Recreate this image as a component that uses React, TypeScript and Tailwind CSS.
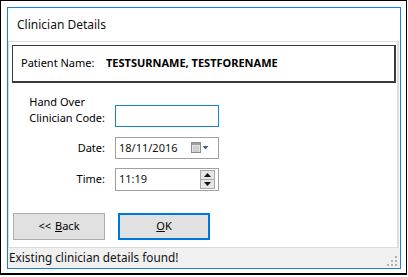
import React from "react";

const font = { fontFamily: '"Noto Sans", "Open Sans", sans-serif' };

function CalendarIcon() {
  return (
    <svg width="18" height="12" viewBox="0 0 18 12">
      <rect x="0.5" y="0.5" width="9" height="10" fill="#e4e4e4" stroke="#8c8c8c" />
      <rect x="1" y="1" width="8" height="2" fill="#a0a0a0" />
      <line x1="2" y1="5" x2="8" y2="5" stroke="#bcbcbc" />
      <line x1="2" y1="7" x2="8" y2="7" stroke="#bcbcbc" />
      <line x1="2" y1="9" x2="8" y2="9" stroke="#bcbcbc" />
      <path d="M11.5 4 L17.5 4 L14.5 7.5 Z" fill="#4b5c8c" />
    </svg>
  );
}

function Spin() {
  return (
    <div className="flex flex-col w-[15px] h-[19px] border border-[#a8a8a8] bg-[#e6e6e6]">
      <div className="flex-1 flex items-center justify-center border-b border-[#a8a8a8]">
        <svg width="7" height="4" viewBox="0 0 7 4"><path d="M0 4 L3.5 0 L7 4 Z" fill="#111" /></svg>
      </div>
      <div className="flex-1 flex items-center justify-center">
        <svg width="7" height="4" viewBox="0 0 7 4"><path d="M0 0 L3.5 4 L7 0 Z" fill="#111" /></svg>
      </div>
    </div>
  );
}

function Grip() {
  const dots = [
    [8, 0],
    [4, 4], [8, 4],
    [0, 8], [4, 8], [8, 8],
  ];
  return (
    <svg width="11" height="11" viewBox="0 0 11 11">
      {dots.map(([x, y], i) => (
        <rect key={i} x={x} y={y} width="2" height="2" fill="#b0b0b0" />
      ))}
    </svg>
  );
}

export default function App() {
  return (
    <div className="w-[408px] h-[277px] bg-white text-black text-[11px]" style={font}>
      <div className="w-[407px] h-[275px] border border-black border-b-2 pt-[6px] pl-[6px] pr-[5px] pb-[4px]">
        <div className="w-full h-full border border-[#1a82d6] flex flex-col bg-white">
          <div className="h-[33px] flex items-center pl-[9px] text-[12px] text-[#111]">Clinician Details</div>
          <div className="flex-1 border border-[#dcdcdc] border-r-2 mr-[1px] flex flex-col">
            <div className="mt-[3px] ml-[3px] mr-[1px] h-[38px] border border-[#3a3a3a] border-r-2 border-b-2 flex items-center">
              <span className="ml-[8px] w-[85px]">Patient Name:</span>
              <span className="font-bold">TESTSURNAME, TESTFORENAME</span>
            </div>
            <div className="flex mt-[9px]">
              <div className="w-[106px] flex justify-end pr-[10px]">
                <div className="leading-[16px] mt-[2px]">
                  <div>Hand Over</div>
                  <div>Clinician Code:</div>
                </div>
              </div>
              <div className="w-[104px] h-[22px] mt-[13px] border border-[#1a82d6]" />
            </div>
            <div className="flex mt-[10px] items-center">
              <div className="w-[106px] text-right pr-[10px]">Date:</div>
              <div className="w-[104px] h-[22px] border border-[#a0a0a0] flex items-center pl-[3px] pr-[9px]">
                <span className="flex-1 text-[#111]">18/11/2016</span>
                <CalendarIcon />
              </div>
            </div>
            <div className="flex mt-[9px] items-center">
              <div className="w-[106px] text-right pr-[10px]">Time:</div>
              <div className="w-[104px] h-[23px] border border-[#a0a0a0] flex items-center pl-[3px] pr-[3px]">
                <span className="flex-1 text-[#111]">11:19</span>
                <Spin />
              </div>
            </div>
            <div className="flex mt-[22px] ml-[4px] gap-[13px]">
              <button className="w-[92px] h-[27px] bg-[#e1e1e1] border border-[#adadad] flex items-center justify-center">
                &lt;&lt; <span className="underline ml-[4px]">B</span>ack
              </button>
              <button className="w-[92px] h-[27px] bg-[#e1e1e1] border-2 border-[#0078d7] flex items-center justify-center">
                <span className="underline">O</span>K
              </button>
            </div>
          </div>
          <div className="h-[20px] bg-[#f0f0f0] flex items-center pl-[1px] relative">
            <span className="text-[11.75px] text-[#111]">Existing clinician details found!</span>
            <div className="absolute right-[2px] bottom-[1px]"><Grip /></div>
          </div>
        </div>
      </div>
    </div>
  );
}
